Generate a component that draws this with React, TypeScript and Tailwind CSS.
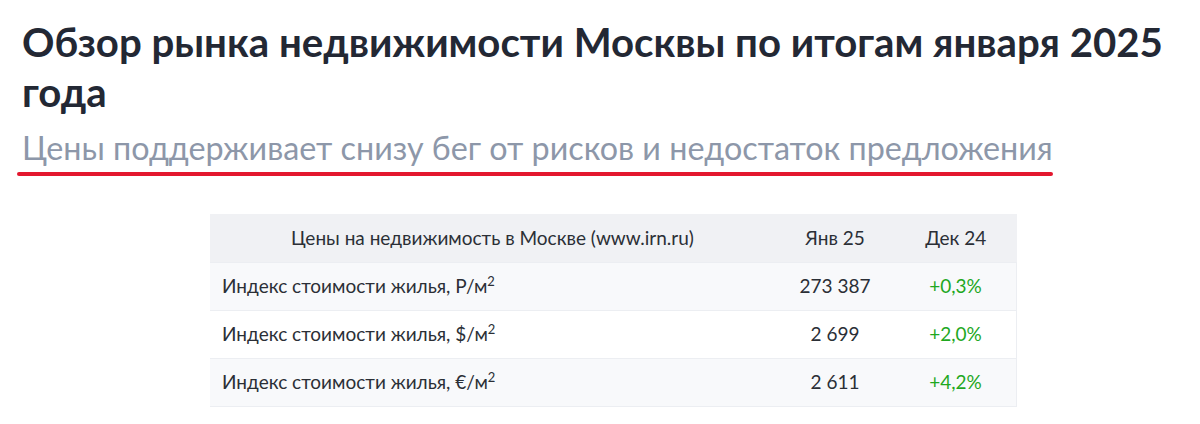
const rows = [
  { label: 'Р', value: '273 387', change: '+0,3%' },
  { label: '$', value: '2 699', change: '+2,0%' },
  { label: '€', value: '2 611', change: '+4,2%' },
];

const App = () => {
  return (
    <div className="h-[424px] w-[1200px] bg-white font-['Lato',sans-serif]">
      <div className="px-[22px] pt-[17px]">
        <h1 className="text-[40.2px] font-bold leading-[50px] text-[#232834]">
          Обзор рынка недвижимости Москвы по итогам января 2025 года
        </h1>
        <div className="mt-[11px] inline-block">
          <p className="text-[32.3px] leading-[40px] text-[#8d97a9]">
            Цены поддерживает снизу бег от рисков и недостаток предложения
          </p>
          <div className="-ml-[5px] mt-[4px] h-[4px] rounded-full bg-[#e3172e]" />
        </div>
      </div>

      <div className="mt-[38px] flex pl-[210px]">
        <table className="w-[807px] border-collapse text-[19px] text-[#2b2f36]">
          <thead>
            <tr className="h-[48px] bg-[#f0f1f4]">
              <th className="w-[565px] text-center font-normal">
                Цены на недвижимость в Москве (www.irn.ru)
              </th>
              <th className="w-[120px] text-center font-normal">Янв 25</th>
              <th className="text-center font-normal">Дек 24</th>
            </tr>
          </thead>
          <tbody>
            {rows.map((row, i) => (
              <tr
                key={row.label}
                className={`h-[48px] border-t border-r border-[#eceef2] ${
                  i % 2 === 0 ? 'bg-[#f8f9fb]' : 'bg-white'
                } ${i === rows.length - 1 ? 'border-b' : ''}`}
              >
                <td className="pl-[12px]">
                  Индекс стоимости жилья, {row.label}/м
                  <sup className="text-[13px]">2</sup>
                </td>
                <td className="text-center">{row.value}</td>
                <td className="text-center text-[#1fa81f]">{row.change}</td>
              </tr>
            ))}
          </tbody>
        </table>
      </div>
    </div>
  );
};

export default App;
